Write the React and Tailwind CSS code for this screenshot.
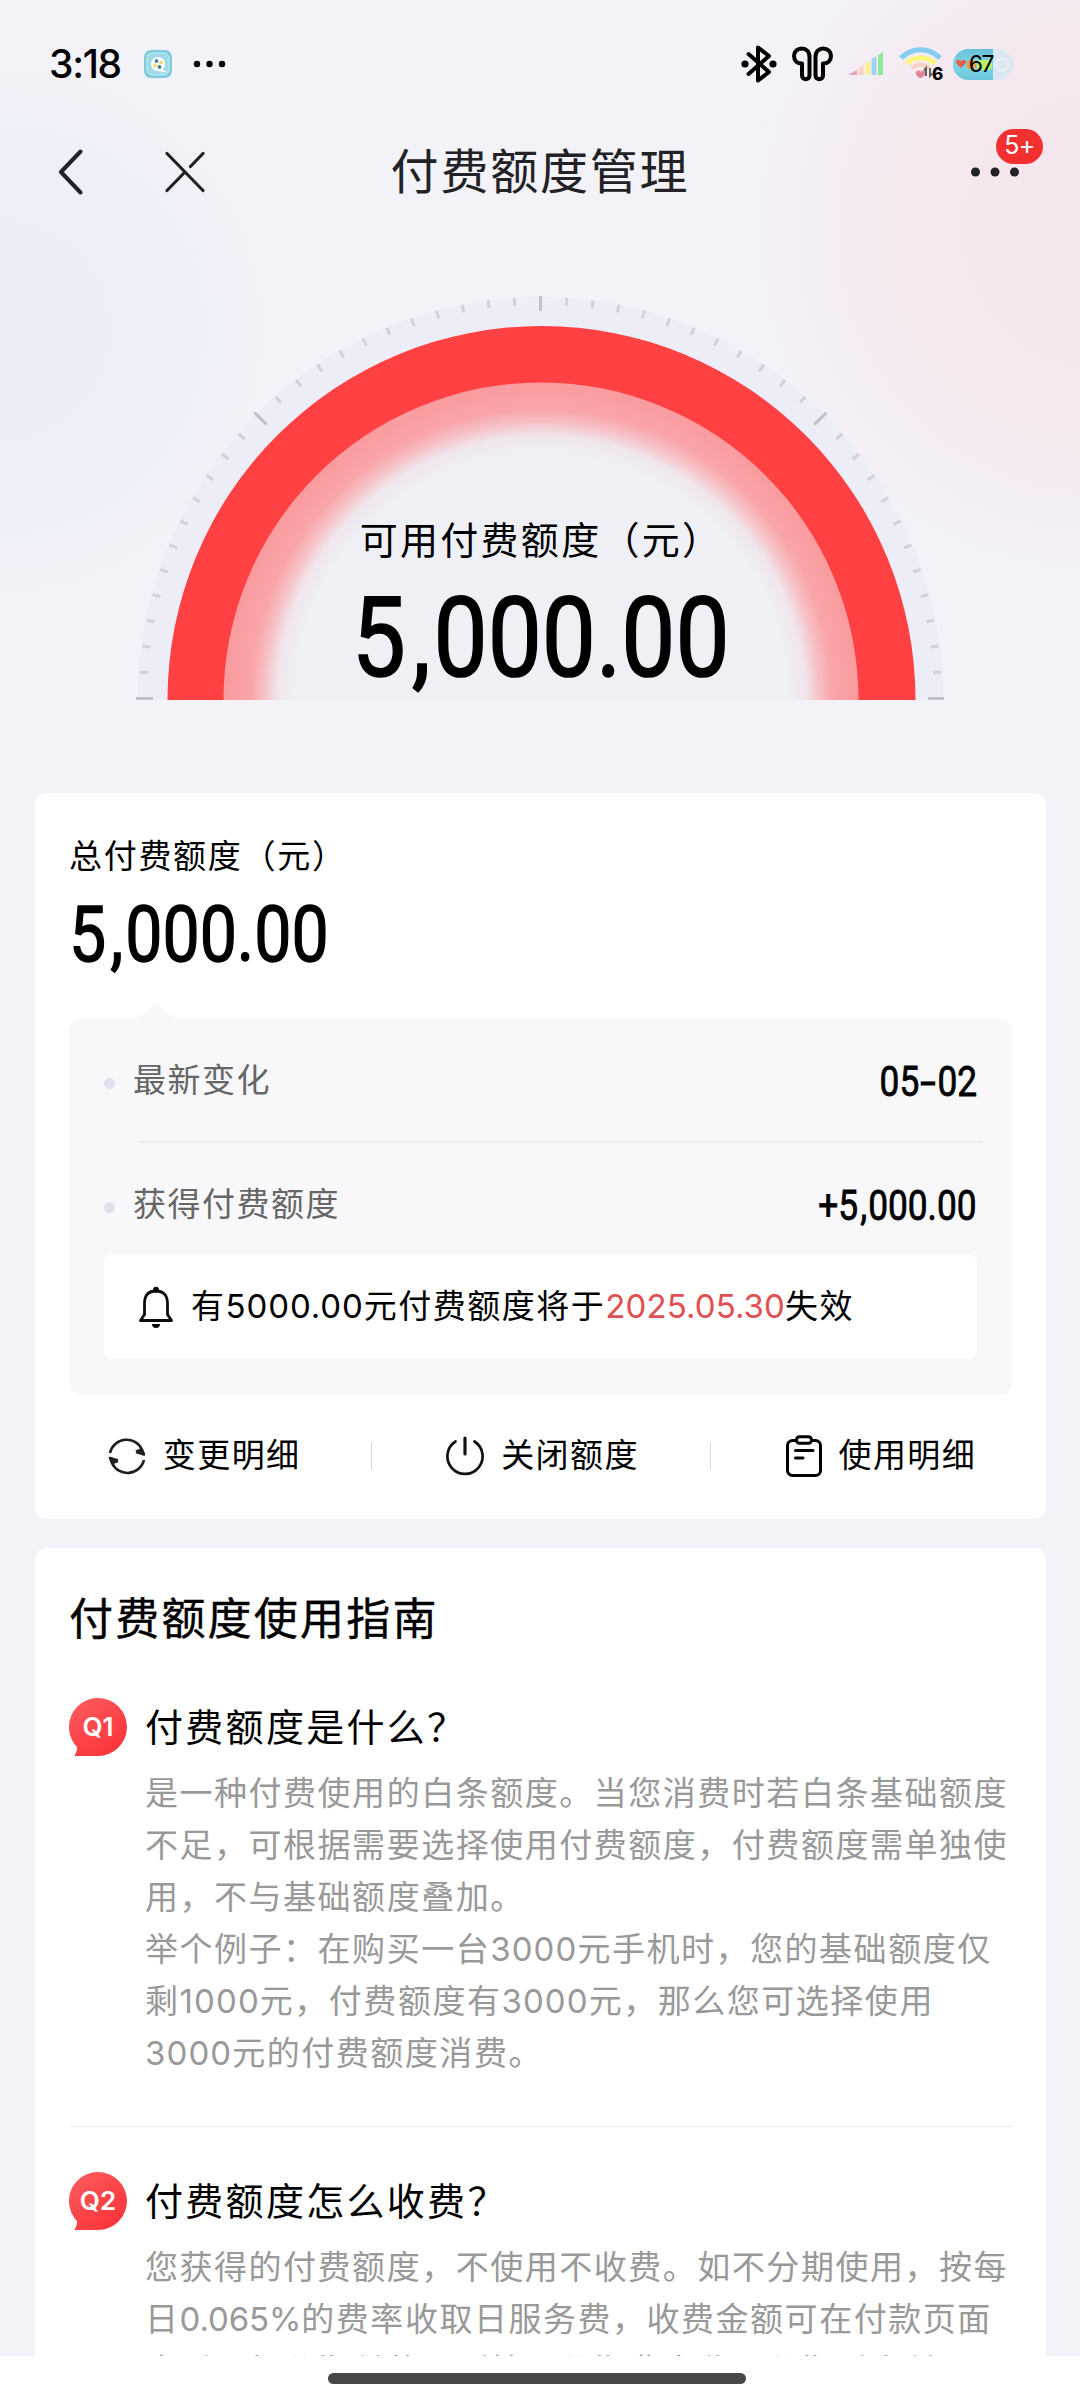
const actions = [
  { label: "变更明细", icon: RefreshIcon },
  { label: "关闭额度", icon: PowerIcon },
  { label: "使用明细", icon: ClipboardIcon },
];

const questions = [
  {
    tag: "Q1",
    title: "付费额度是什么？",
    lines: [
      "是一种付费使用的白条额度。当您消费时若白条基础额度",
      "不足，可根据需要选择使用付费额度，付费额度需单独使",
      "用，不与基础额度叠加。",
      "举个例子：在购买一台3000元手机时，您的基础额度仅",
      "剩1000元，付费额度有3000元，那么您可选择使用",
      "3000元的付费额度消费。",
    ],
  },
  {
    tag: "Q2",
    title: "付费额度怎么收费？",
    lines: [
      "您获得的付费额度，不使用不收费。如不分期使用，按每",
      "日0.065%的费率收取日服务费，收费金额可在付款页面",
      "查看。如分期付款，则按照分期费率收，分期后实付",
    ],
  },
];

function RefreshIcon() {
  return (
    <svg width="38" height="40" viewBox="0 0 38 40" fill="none" stroke="#1f1f1f" strokeWidth="2.6">
      <path d="M2 17A17 17 0 0 1 34 13.5L36 18.5L28 16" strokeLinejoin="round" />
      <path d="M36 24A17 17 0 0 1 4 27L2 22L10 24.5" strokeLinejoin="round" />
      <path d="M27 14.5L36.5 19L34 12Z" fill="#1f1f1f" stroke="none" />
      <path d="M11 26L1.5 21.5L4 28.5Z" fill="#1f1f1f" stroke="none" />
    </svg>
  );
}

function PowerIcon() {
  return (
    <svg width="38" height="40" viewBox="0 0 38 40" fill="none" stroke="#111" strokeWidth="2.7" strokeLinecap="round">
      <path d="M19 2V18" strokeWidth="3.2" />
      <path d="M9.5 5.5A17.6 17.6 0 1 0 28.5 5.5" />
    </svg>
  );
}

function ClipboardIcon() {
  return (
    <svg width="36" height="42" viewBox="0 0 36 42" fill="none" stroke="#000" strokeWidth="3" strokeLinecap="round">
      <path d="M10 5.5H6.5A5 5 0 0 0 1.5 10.5V35.5A5 5 0 0 0 6.5 40.5H29.5A5 5 0 0 0 34.5 35.5V10.5A5 5 0 0 0 29.5 5.5H26" />
      <rect x="10.5" y="1.8" width="15" height="6.5" rx="3" />
      <path d="M9.5 15.5H27M9.5 23H17" />
    </svg>
  );
}

function BellIcon() {
  return (
    <svg width="34" height="42" viewBox="0 0 34 42" fill="none" stroke="#0d0d0d" strokeWidth="2.8">
      <path d="M1.5 34.5H32.5L28.5 28.5V17.5C28.5 9 24 5 17 5S5.5 9 5.5 17.5V28.5Z" strokeLinejoin="round" />
      <circle cx="17" cy="3.8" r="3" fill="#0d0d0d" stroke="none" />
      <path d="M13 38H21A4 4 0 0 1 13 38Z" fill="#0d0d0d" stroke="none" />
    </svg>
  );
}

function StatusBar() {
  return (
    <div className="flex h-32 items-center pr-[67px] pl-[49px] text-black">
      <span className="w-[73px] text-[39px] font-medium tracking-[-1.3px]">3:18</span>
      <svg className="ml-[22px]" width="28" height="28" viewBox="0 0 28 28">
        <rect width="28" height="28" rx="7" fill="#7fcbdc" />
        <rect x="3" y="3" width="22" height="22" rx="5" fill="#9edbe6" stroke="#c4ecf2" />
        <circle cx="14" cy="14" r="7" fill="#fff" />
        <path d="M18 19L23 22.5L14 21Z" fill="#fff" />
        <circle cx="12.5" cy="11" r="1.9" fill="#3c86a0" />
        <circle cx="17" cy="12.5" r="1.9" fill="#f6d66e" />
        <circle cx="11" cy="15.5" r="1.9" fill="#f6d66e" />
        <circle cx="15.5" cy="17" r="1.9" fill="#3c86a0" />
      </svg>
      <svg className="ml-[21px]" width="34" height="8" viewBox="0 0 34 8">
        <circle cx="4" cy="4" r="3.2" />
        <circle cx="16.5" cy="4" r="3.2" />
        <circle cx="29" cy="4" r="3.2" />
      </svg>
      <svg className="ml-auto" width="36" height="40" viewBox="0 0 36 40" fill="none" stroke="#000" strokeWidth="4">
        <path d="M7.5 10L28 28L17 36.5V3.5L28 12L7.5 30" strokeLinejoin="round" strokeLinecap="round" />
        <circle cx="4" cy="20" r="3.6" fill="#000" stroke="none" />
        <circle cx="32" cy="20" r="3.6" fill="#000" stroke="none" />
      </svg>
      <svg className="ml-[15px]" width="41" height="36" viewBox="0 0 41 36" fill="none" stroke="#000" strokeWidth="4">
        <path d="M17.5 11C17.5 5.5 14 2.5 9.8 2.5S2 5.5 2 10S5 17.5 10 17.5V29.5C10 34.5 17.5 34.5 17.5 29.5Z" strokeLinejoin="round" />
        <path d="M23.5 11C23.5 5.5 27 2.5 31.2 2.5S39 5.5 39 10S36 17.5 31 17.5V29.5C31 34.5 23.5 34.5 23.5 29.5Z" strokeLinejoin="round" />
      </svg>
      <svg className="ml-4" width="34" height="24" viewBox="0 0 34 24">
        <path d="M0 22L8 18V23H0Z" fill="#e3a3b8" />
        <path d="M9.5 16L14.5 13V23H9.5Z" fill="#f8d3c9" />
        <path d="M16.5 11.5L21 9V23H16.5Z" fill="#fbf08c" />
        <path d="M22.5 7L27.5 4V23H22.5Z" fill="#9ed4f2" />
        <path d="M29 3L34 0V23H29Z" fill="#92e89a" />
      </svg>
      <svg className="ml-4" width="46" height="38" viewBox="0 -1 46 38" fill="none">
        <path d="M2 12C13 1 30 1 41 12" stroke="#82cdf0" strokeWidth="5" />
        <path d="M7.5 17.5C15 10 28 10 36 17.5" stroke="#fdf67e" strokeWidth="5" />
        <path d="M13 22.5C18 17.5 25 17.5 30 22.5" stroke="#f9cfc4" strokeWidth="4" />
        <path d="M17 26C19 23.5 21 24.5 21.5 26C22 24.5 25 24 26 26C27 29 23 32 21.5 32S16 29 17 26Z" fill="#df8499" />
        <path d="M27 30V22L25 24.5M31 22V30L33 27.5" stroke="#555" strokeWidth="1.8" />
        <text x="33" y="34" fontSize="17" fontWeight="800" fill="#000">6</text>
      </svg>
      <div className="relative ml-2 flex h-[31px] w-[60px] items-center justify-center overflow-hidden rounded-full bg-[#dbe8f2]">
        <div className="absolute inset-y-0 left-0 w-10 bg-linear-to-b from-[#69bfdb] via-[#7ed6e3] to-[#6cc6dc]" />
        <svg className="absolute top-0 left-0" width="60" height="31" viewBox="0 0 60 31">
          <path d="M8 19L3 14C2 10 7 10 8 12.5C9 10 13 10 13 14Z" fill="#e0614d" />
          <rect x="14" y="11" width="9" height="9" rx="3" fill="#eb9a45" />
          <rect x="24" y="11" width="15" height="10" rx="4" fill="#b9ee6e" />
          <circle cx="49" cy="15.5" r="6" fill="none" stroke="#e9f1f8" strokeWidth="2" />
        </svg>
        <span className="relative mr-1 text-[23px] tracking-[-1.5px]">67</span>
      </div>
    </div>
  );
}

function NavBar() {
  return (
    <div className="grid h-[87px] grid-cols-3 items-center">
      <div className="flex items-center pl-[58px]">
        <svg width="25" height="46" viewBox="0 0 25 46" fill="none" stroke="#222226" strokeWidth="4" strokeLinecap="round" strokeLinejoin="round">
          <path d="M22.5 2.5L3 23L22.5 43.5" />
        </svg>
        <svg className="ml-[82px]" width="40" height="42" viewBox="0 0 40 42" fill="none" stroke="#222226" strokeWidth="3.2" strokeLinecap="round">
          <path d="M2 2.5L38 39.5M38 2.5L25.5 15.5M19.5 21.5L2 39.5" />
        </svg>
      </div>
      <h1 className="text-center text-[48px] whitespace-nowrap tracking-[1.8px] text-[#222226]">付费额度管理</h1>
      <div className="relative flex justify-end pr-[60px]">
        <svg width="50" height="10" viewBox="0 0 50 10" fill="#222226">
          <circle cx="5.5" cy="5" r="4.5" />
          <circle cx="25" cy="5" r="4.5" />
          <circle cx="44.5" cy="5" r="4.5" />
        </svg>
        <span className="absolute top-[-38px] right-[37px] flex h-[35px] w-[47px] items-center justify-center rounded-full bg-[#f23030] text-[25px] tracking-[-0.5px] text-white">
          5+
        </span>
      </div>
    </div>
  );
}

function Gauge() {
  const ticks = Array.from({ length: 49 }, (_, i) => i);
  return (
    <div className="grid justify-center pt-[81px] pb-[93px]">
      <svg className="col-start-1 row-start-1" width="808" height="404" viewBox="0 0 808 404">
        <defs>
          <radialGradient id="glow" gradientUnits="userSpaceOnUse" cx="405.5" cy="404" r="318">
            <stop offset="0.77" stopColor="#eff0f6" />
            <stop offset="0.83" stopColor="#f0e6ec" />
            <stop offset="0.87" stopColor="#f6c3c8" />
            <stop offset="0.915" stopColor="#f9a5a9" />
            <stop offset="1" stopColor="#fa9b9f" />
          </radialGradient>
        </defs>
        <circle cx="404.5" cy="404" r="403" fill="#ecedf7" />
        {ticks.map(i => {
          const major = i % 12 === 0;
          return (
            <line
              key={i}
              x1={major ? 0 : 3}
              x2={major ? 17 : 11}
              y1="402.5"
              y2="402.5"
              stroke={major ? "#bfc0c8" : "#d0d1da"}
              strokeWidth="3"
              transform={`rotate(${i * 3.75} 404.5 402.5)`}
            />
          );
        })}
        <circle cx="405.5" cy="404" r="374" fill="#ff4143" />
        <circle cx="405" cy="404" r="317.5" fill="url(#glow)" />
      </svg>
      <div className="z-10 col-start-1 row-start-1 flex flex-col items-center pt-[216px]">
        <p className="ml-0.5 text-[38px] leading-[56px] tracking-[2.3px]">可用付费额度（元）</p>
        <p className="mt-[11px] ml-0.5 text-[112px] leading-[112px]">
          <Amount className="origin-center scale-x-[0.86] [-webkit-text-stroke:1.6px_black]" value="5,000.00" />
        </p>
      </div>
    </div>
  );
}

// tall narrow figures, the comma gets some room on its left
function Amount({ value, className }) {
  return (
    <span className={`inline-block font-['Roboto'] ${className}`}>
      {value.split(/([,-])/).map((part, i) => {
        if (part === ",") return <span key={i} className="mr-[0.03em] ml-[0.06em]">,</span>;
        if (part === "-") return <span key={i} className="mx-[0.12em] inline-block scale-x-160">-</span>;
        return part;
      })}
    </span>
  );
}

function ChangeRow({ label, value }) {
  return (
    <div className="flex h-[124px] items-center pr-[35px] pl-[35px]">
      <i className="mt-1 size-[11px] rounded-full bg-[#e2e0ee]" />
      <span className="ml-[18px] text-[33px] tracking-[1.5px] text-[#666]">{label}</span>
      <Amount className="ml-auto origin-right scale-x-[0.84] text-[42px] [-webkit-text-stroke:0.8px_black]" value={value} />
    </div>
  );
}

function QuotaCard() {
  return (
    <section className="mx-[35px] mr-[34px] h-[726px] rounded-xl bg-white pt-[38px]">
      <p className="pl-[34px] text-[33px] leading-[50px] tracking-[1.7px]">总付费额度（元）</p>
      <p className="mt-[14px] pl-[34px] text-[77px] leading-[77px]">
        <Amount className="origin-left scale-x-[0.86] [-webkit-text-stroke:1.3px_black]" value="5,000.00" />
      </p>
      <svg className="mt-[29px] ml-[102px] block" width="38" height="16" viewBox="0 0 38 16">
        <path d="M0 16L19 0L38 16Z" fill="#f8f8fb" />
      </svg>
      <div className="mx-[34px] h-[376px] rounded-xl bg-[#f8f8fb]">
        <ChangeRow label="最新变化" value="05-02" />
        <div className="-mt-0.5 mr-[29px] ml-[69px] h-0.5 bg-[#ececf0]" />
        <ChangeRow label="获得付费额度" value="+5,000.00" />
        <div className="mx-[35px] -mt-3 flex h-[104px] items-center rounded-lg bg-white pl-[35px]">
          <BellIcon />
          <p className="ml-[18px] text-[33px] tracking-[1.5px]">
            有<span className="tracking-[0.9px]">5000.00</span>元付费额度将于
            <span className="tracking-[0.1px] text-[#e05052]">2025.05.30</span>失效
          </p>
        </div>
      </div>
      <div className="mt-[36px] -mr-[4px] grid h-[44px] grid-cols-3">
        {actions.map(({ label, icon: Icon }, i) => (
          <div key={label} className="relative flex items-center justify-center gap-[17px]">
            <Icon />
            <span className="text-[33px] tracking-[1.4px]">{label}</span>
            {i < 2 && <i className="absolute right-px h-7 w-px bg-[#d8d8de]" />}
          </div>
        ))}
      </div>
    </section>
  );
}

function QuestionBadge({ tag }) {
  return (
    <svg className="shrink-0" width="58" height="58" viewBox="0 0 58 58">
      <defs>
        <linearGradient id={`badge-${tag}`} x1="0" y1="0" x2="0.7" y2="1">
          <stop offset="0" stopColor="#fd5d61" />
          <stop offset="1" stopColor="#fb3439" />
        </linearGradient>
      </defs>
      <path d="M29 0A29 29 0 1 1 29 58H5.5C7 55 8.5 51 8 49A29 29 0 0 1 29 0Z" fill={`url(#badge-${tag})`} />
      <text x="29" y="37.5" fontSize="26" fontWeight="600" textAnchor="middle" fill="#fff">{tag}</text>
    </svg>
  );
}

function AnswerLine({ text }) {
  return (
    <p>
      {text.split(/([\d.%]+)/).map((part, i) => {
        if (i % 2 === 0) return part;
        return (
          <span key={i} className={part.includes("%") ? "tracking-[-0.1px]" : "tracking-[1.1px]"}>
            {part}
          </span>
        );
      })}
    </p>
  );
}

function Guide() {
  return (
    <section className="mx-[35px] mt-[29px] mr-[34px] rounded-t-xl bg-white px-[34px] pt-[38px]">
      <h2 className="text-[44px] leading-[66px] tracking-[2.2px] [-webkit-text-stroke:0.4px_black]">付费额度使用指南</h2>
      {questions.map((q, i) => (
        <div key={q.tag} className={i === 0 ? "mt-[46px] border-b border-[#ededed] pb-[47px]" : "pt-[45px]"}>
          <div className="flex items-center">
            <QuestionBadge tag={q.tag} />
            <h3 className="ml-[18px] text-[38px] leading-[58px] tracking-[2.3px]">{q.title}</h3>
          </div>
          <div className="mt-[11px] ml-[76px] text-[33px] leading-[52px] tracking-[1.52px] whitespace-nowrap text-[#999]">
            {q.lines.map(line => (
              <AnswerLine key={line} text={line} />
            ))}
          </div>
        </div>
      ))}
    </section>
  );
}

export default function App() {
  return (
    <div
      lang="zh-CN"
      className="flex h-[2400px] w-[1080px] flex-col overflow-hidden bg-[#f3f2f8] font-['Inter','Noto_Sans_CJK_SC',sans-serif] text-black"
    >
      <main className="h-[2356px] shrink-0 overflow-hidden bg-[radial-gradient(circle_at_0px_330px,#e9eef7_0px,#ebeff7_130px,transparent_300px),radial-gradient(circle_at_1100px_230px,#f5e5ed_0px,#f5e8ef_200px,transparent_370px)]">
        <StatusBar />
        <NavBar />
        <Gauge />
        <QuotaCard />
        <Guide />
      </main>
      <footer className="flex flex-1 items-start justify-center bg-white pt-[17px]">
        <div className="mr-1.5 h-[11px] w-[418px] rounded-full bg-[#484848]" />
      </footer>
    </div>
  );
}
